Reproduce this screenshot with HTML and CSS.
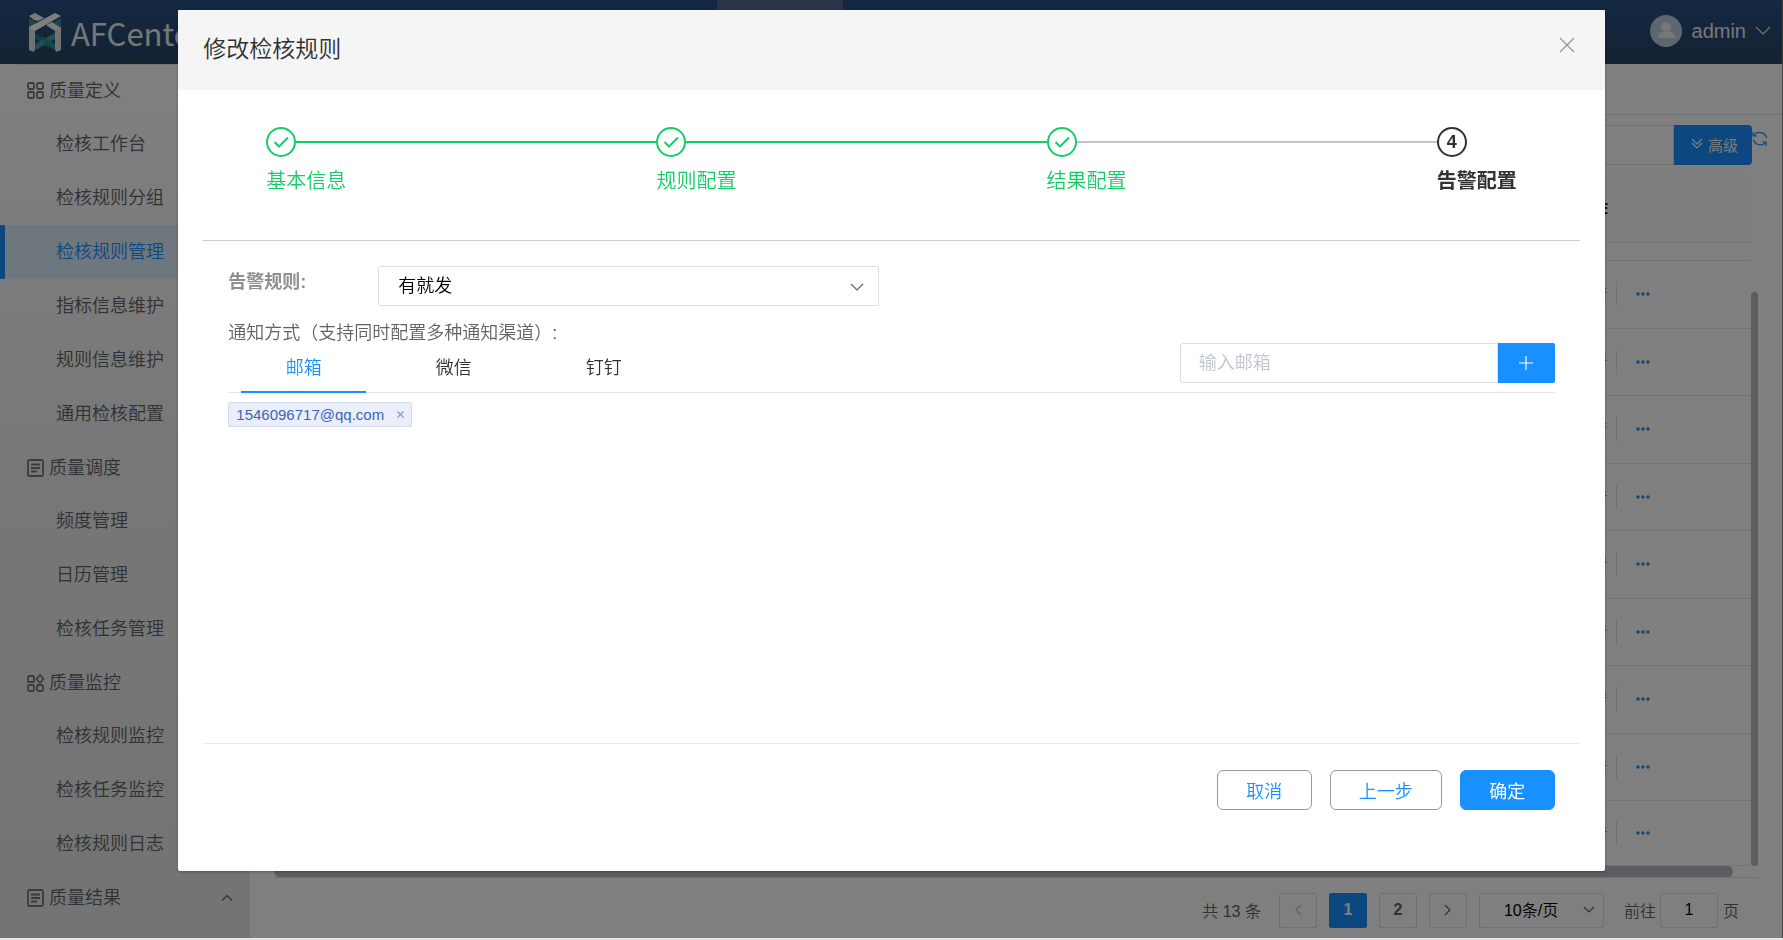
FILE: index.html
```
<!DOCTYPE html>
<html lang="zh-CN">

<head>
    <meta charset="utf-8">
    <title>检核规则管理</title>
    <link rel="stylesheet" href="styles.css">
</head>

<body>
    <div class="page">
        <!-- Header -->
        <header class="topbar">
            <a class="logo" href="#">
                <svg width="32" height="39" viewBox="0 0 32 39">
                    <path fill="#3f8f94" d="M0 5l7 4v2l-7 4zM32 5l-7 4v2l7 5z" />
                    <path fill="#1f7f88" d="M6 20l20 11v6L6 26z" />
                    <path fill="#3aa3a8" d="M26 20v6L6 37v-6z" />
                    <path fill="#2b8d94" d="M12 23l14 8v6l-10-5z" />
                    <path fill="#dfe8e6" d="M0 14l6 4v18l-1 3-5-2zM32 14l-6 4v18l1 3 5-2z" />
                    <path fill="#f4f8f7" d="M0 3l6-3 9 5-6 3-4-1zM17 12l6-3 9 6-6 3z" />
                    <path fill="#ffffff" d="M26 0l6 3L6 18l-6-3v-1z" />
                </svg>
                <span>AFCenter</span>
            </a>
            <div class="top-tab"></div>
            <button class="user">
                <svg width="33" height="33" viewBox="0 0 33 33">
                    <circle cx="16" cy="16" r="16" fill="#b9cfe0" />
                    <circle cx="16" cy="12" r="5" fill="#eee" />
                    <path fill="#eee" d="M8 23c0-4 3-6 5-6h7c2 0 5 2 5 6z" />
                </svg>
                <span>admin</span>
                <svg width="16" height="10" viewBox="0 0 16 10"><path class="line" d="M1 1l7 7 7-7" /></svg>
            </button>
        </header>

        <div class="layout">
            <!-- Sidebar -->
            <nav class="sidebar">
                <div class="menu-title">
                    <svg width="18" height="18" viewBox="0 0 18 18"><g class="icon"><rect x="2" y="1" width="6" height="6" rx="1.5" /><rect x="11" y="1" width="6" height="6" rx="1.5" /><rect x="2" y="10" width="6" height="6" rx="1.5" /><rect x="11" y="10" width="6" height="6" rx="1.5" /></g></svg>
                    质量定义
                </div>
                <a class="menu-item" href="#">检核工作台</a>
                <a class="menu-item" href="#">检核规则分组</a>
                <a class="menu-item active" href="#">检核规则管理</a>
                <a class="menu-item" href="#">指标信息维护</a>
                <a class="menu-item" href="#">规则信息维护</a>
                <a class="menu-item" href="#">通用检核配置</a>
                <div class="menu-title">
                    <svg width="18" height="18" viewBox="0 0 18 18"><g class="icon"><rect x="2" y="1" width="15" height="16" rx="1.5" /><path d="M5 5.500h9M5 9h9M5 12.500h6" /></g></svg>
                    质量调度
                </div>
                <a class="menu-item" href="#">频度管理</a>
                <a class="menu-item" href="#">日历管理</a>
                <a class="menu-item" href="#">检核任务管理</a>
                <div class="menu-title">
                    <svg width="18" height="18" viewBox="0 0 18 18"><g class="icon"><rect x="2" y="2" width="6" height="6" rx="1" /><path d="M14 1l3.500 4-3.500 4-3.500-4z" /><rect x="2" y="11" width="6" height="6" rx="1.500" /><rect x="11" y="11" width="6" height="6" rx="1.500" /></g></svg>
                    质量监控
                </div>
                <a class="menu-item" href="#">检核规则监控</a>
                <a class="menu-item" href="#">检核任务监控</a>
                <a class="menu-item" href="#">检核规则日志</a>
                <div class="menu-title">
                    <svg width="18" height="18" viewBox="0 0 18 18"><g class="icon"><rect x="2" y="1" width="15" height="16" rx="1.5" /><path d="M5 5.500h9M5 9h9M5 12.500h6" /></g></svg>
                    质量结果
                    <svg class="arrow" width="12" height="8" viewBox="0 0 12 8"><path class="line" d="M1 6.500l5-5 5 5" /></svg>
                </div>
            </nav>

            <!-- Rule list -->
            <main class="main">
                <div class="crumb"></div>
                <div class="search">
                    <input type="text" aria-label="搜索">
                    <button class="advanced">
                        <svg width="12" height="12" viewBox="0 0 12 12"><path class="line" d="M1 1l5 5 5-5M1 5l5 5 5-5" /></svg>
                        高级
                    </button>
                    <button class="refresh" aria-label="刷新">
                        <svg width="16" height="18" viewBox="0 0 16 18"><path class="line" d="M1 2v4h4M1.500 6a7 7 0 0 1 13 2.500M14 16v-4h-4M14 12a7 7 0 0 1-12.500-2.500" /></svg>
                    </button>
                </div>
                <div class="table-wrap">
                    <table class="table">
                        <thead>
                            <tr><th></th><th>操作</th></tr>
                        </thead>
                        <tbody id="rows">
                            <tr class="cut"><td></td><td></td></tr>
                        </tbody>
                    </table>
                    <div class="scroll-y"><i></i></div>
                </div>
                <div class="scroll-x"><i></i></div>
                <div class="pager">
                    <span class="total">共 13 条</span>
                    <button disabled aria-label="上一页"><svg width="8" height="12" viewBox="0 0 8 12"><path class="line" d="M7 1L2 6l5 5" /></svg></button>
                    <button class="current">1</button>
                    <button>2</button>
                    <button aria-label="下一页"><svg width="8" height="12" viewBox="0 0 8 12"><path class="line" d="M1 1l5 5-5 5" /></svg></button>
                    <div class="select page-size">
                        <select aria-label="每页条数"><option>10条/页</option></select>
                        <svg width="12" height="8" viewBox="0 0 12 8"><path class="line" d="M1 1l5 5 5-5" /></svg>
                    </div>
                    <label for="jump">前往</label>
                    <input type="text" id="jump" value="1">
                    <span>页</span>
                </div>
            </main>
        </div>
    </div>

    <!-- Edit dialog -->
    <div class="mask">
        <div class="dialog" role="dialog" aria-labelledby="dialogTitle">
            <div class="dialog-header">
                <h1 id="dialogTitle">修改检核规则</h1>
                <button class="close" aria-label="关闭"><svg width="16" height="16" viewBox="0 0 16 16"><path class="line" d="M1 1l14 14M15 1L1 15" /></svg></button>
            </div>
            <div class="dialog-body">
                <ol class="steps">
                    <li class="step done">
                        <div class="step-head"><b><svg width="16" height="12" viewBox="0 0 16 12"><path d="M1.500 6l4.500 4.500 9-9" /></svg></b></div>
                        基本信息
                    </li>
                    <li class="step done">
                        <div class="step-head"><b><svg width="16" height="12" viewBox="0 0 16 12"><path d="M1.500 6l4.500 4.500 9-9" /></svg></b></div>
                        规则配置
                    </li>
                    <li class="step done next">
                        <div class="step-head"><b><svg width="16" height="12" viewBox="0 0 16 12"><path d="M1.500 6l4.500 4.500 9-9" /></svg></b></div>
                        结果配置
                    </li>
                    <li class="step now">
                        <div class="step-head"><b>4</b></div>
                        告警配置
                    </li>
                </ol>
                <form class="form">
                    <div class="form-row">
                        <label for="alarmRule">告警规则:</label>
                        <div class="select rule">
                            <select id="alarmRule"><option>有就发</option></select>
                            <svg width="14" height="8" viewBox="0 0 14 8"><path class="line" d="M1 1l6 6 6-6" /></svg>
                        </div>
                    </div>
                    <p class="notice">通知方式（支持同时配置多种通知渠道）:</p>
                    <div class="tabs">
                        <button type="button" class="tab active">邮箱</button>
                        <button type="button" class="tab">微信</button>
                        <button type="button" class="tab">钉钉</button>
                        <div class="add-mail">
                            <input type="text" placeholder="输入邮箱" aria-label="邮箱">
                            <button type="button" aria-label="添加"><svg width="14" height="14" viewBox="0 0 14 14"><path class="line" d="M7 0v14M0 7h14" /></svg></button>
                        </div>
                    </div>
                    <div class="tags">
                        <span class="tag">1546096717@qq.com
                            <button type="button" aria-label="删除"><svg width="7" height="7" viewBox="0 0 7 7"><path class="line" d="M.5.5l6 6M6.500.5l-6 6" /></svg></button>
                        </span>
                    </div>
                </form>
                <div class="dialog-footer">
                    <button>取消</button>
                    <button>上一步</button>
                    <button class="primary">确定</button>
                </div>
            </div>
        </div>
    </div>

    <script>
        // 9 visible rows, each with the same actions
        const rows = document.getElementById('rows');
        for (let i = 0; i < 9; i++) {
            const tr = document.createElement('tr');
            tr.innerHTML = '<td></td><td><div class="ops"><a href="#">详情</a><button aria-label="更多">' +
                '<svg width="14" height="4" viewBox="0 0 14 4"><circle cx="2" cy="2" r="1.700"/><circle cx="7" cy="2" r="1.700"/><circle cx="12" cy="2" r="1.700"/></svg>' +
                '</button></div></td>';
            rows.appendChild(tr);
        }
    </script>
</body>

</html>
```
FILE: styles.css
```
* {
    box-sizing: border-box;
}

body {
    margin: 0;
    height: 100vh;
    overflow: hidden;
    background-color: #e6e6e6;
    font-family: "Liberation Sans", "Noto Sans CJK SC", sans-serif;
    font-size: 18px;
    font-weight: 350;
    color: #606266;
}

button,
input,
select {
    font: inherit;
    color: inherit;
    margin: 0;
    padding: 0;
    border: none;
    background: none;
    outline: none;
}

button {
    cursor: pointer;
}

a {
    color: inherit;
    text-decoration: none;
}

svg {
    display: block;
    flex: none;
}

.line {
    fill: none;
    stroke: currentColor;
    stroke-width: 1.2;
}

.page {
    display: flex;
    flex-direction: column;
    height: calc(100vh - 2px);
    background-color: #fff;
    border-right: 1px solid #888;
}

/* Header */
.topbar {
    flex: none;
    display: flex;
    height: 64px;
    background: linear-gradient(#28508a, #2a4560);
    color: #eee;
}

.logo {
    flex: 20;
    display: flex;
    align-items: center;
    gap: 10px;
    padding-left: 29px;
    font-family: "Noto Sans CJK SC", sans-serif;
    font-size: 31px;
    font-weight: 400;
}

.top-tab {
    width: 126px;
    background-color: #52688f;
}

.user {
    flex: 27;
    display: flex;
    align-items: center;
    justify-content: flex-end;
    gap: 9px;
    padding: 0 11px 2px 0;
    font-size: 20px;
}

.layout {
    flex: 1;
    display: flex;
    min-height: 0;
}

/* Sidebar */
.sidebar {
    flex: none;
    width: 250px;
    background: linear-gradient(#fff, #eee 50%, #e8e8e8);
    color: #606266;
}

.menu-title {
    display: flex;
    align-items: center;
    gap: 5px;
    height: 53px;
    margin-left: 17px;
    padding: 0 0 5px 9px;
    border-top: 1px solid #e9e9e9;
}

.menu-title svg {
    margin-top: 4px;
}

.menu-title .arrow {
    margin-left: auto;
    margin-right: 17px;
}

.icon {
    fill: none;
    stroke: #777;
    stroke-width: 1.8;
}

.menu-item {
    display: block;
    height: 54px;
    line-height: 54px;
    padding-left: 56px;
}

.menu-item.active {
    padding-left: 51px;
    border-left: 5px solid #1890ff;
    background-color: #deeefc;
    color: #1890ff;
}

/* Rule list */
.main {
    flex: 1;
    display: flex;
    flex-direction: column;
    min-width: 0;
    padding-left: 24px;
}

.crumb {
    height: 51px;
    margin-left: -24px;
    border-bottom: 1px solid #dcdfe6;
}

.search {
    display: flex;
    height: 40px;
    margin: 10px 14px 0 0;
}

.search input {
    flex: 1;
    border: 1px solid #dcdfe6;
}

.advanced {
    display: flex;
    align-items: center;
    gap: 5px;
    padding: 0 14px 2px 17px;
    border-radius: 0 4px 4px 0;
    background-color: #1890ff;
    color: #fff;
    font-size: 15px;
}

.refresh {
    align-self: flex-start;
    padding-top: 5px;
    color: #1890ff;
}

.table-wrap {
    display: flex;
    margin: 10px 24px 0 0;
}

.table {
    flex: 1;
    border-collapse: collapse;
}

.table th {
    height: 67px;
    padding: 0 12px;
    background-color: #fafafa;
    border-bottom: 1px solid #dfe2ef;
    color: #222;
    font-weight: 700;
    text-align: left;
}

.table td {
    height: 67px;
    padding: 0 11px;
    border-bottom: 1px solid #e4e6f2;
}

.table tr:nth-child(even) td {
    height: 68px;
}

.table th:last-child {
    width: 191px;
}

.table .cut td {
    height: 18px;
}

.table tr:last-child td {
    height: 65px;
}

.ops {
    display: flex;
    align-items: center;
    height: 24px;
    color: #1890ff;
}

.ops button {
    height: 24px;
    margin-left: 9px;
    padding-left: 19px;
    border-left: 1px solid #dcdfe6;
    fill: #1890ff;
}

.scroll-y {
    width: 7px;
    padding-top: 117px;
}

.scroll-y i {
    display: block;
    height: 100%;
    border-radius: 4px;
    background-color: #b9bbc0;
}

.scroll-x {
    height: 12px;
    margin-right: 24px;
    border-bottom: 1px solid #dfe2ef;
}

.scroll-x i {
    display: block;
    height: 11px;
    margin-right: 25px;
    border-radius: 6px;
    background-color: #b9bbc0;
}

.pager {
    display: flex;
    align-items: center;
    justify-content: flex-end;
    gap: 12px;
    margin-top: 15px;
    padding-right: 43px;
    font-size: 16px;
}

.pager button {
    display: flex;
    align-items: center;
    justify-content: center;
    width: 38px;
    height: 35px;
    border: 1px solid #dcdfe6;
    border-radius: 2px;
    font-weight: 700;
}

.pager button:disabled {
    color: #c0c4cc;
}

.pager .total {
    margin-right: 6px;
}

.pager .current {
    border-color: #1890ff;
    background-color: #1890ff;
    color: #fff;
}

.pager input {
    width: 58px;
    height: 35px;
    margin: 0 -7px 0 -8px;
    border: 1px solid #dcdfe6;
    border-radius: 2px;
    color: #000;
    text-align: center;
}

.select {
    display: grid;
    align-items: center;
    border: 1px solid #dcdfe6;
    border-radius: 2px;
    color: #000;
}

.select select,
.select svg {
    grid-area: 1 / 1;
}

.select select {
    appearance: none;
    width: 100%;
    height: 100%;
}

.select svg {
    justify-self: end;
    color: #606266;
    pointer-events: none;
}

.page-size {
    width: 125px;
    height: 35px;
    margin-right: 8px;
}

.page-size select {
    padding-left: 24px;
}

.page-size svg {
    margin-right: 8px;
}

/* Edit dialog */
.mask {
    position: fixed;
    inset: 0 0 2px;
    background-color: rgba(0, 0, 0, 0.5);
}

.dialog {
    width: 80%;
    margin: 10px auto 0;
    border-radius: 2px;
    background-color: #fff;
    box-shadow: 0 1px 3px rgba(0, 0, 0, 0.3);
}

.dialog-header {
    display: flex;
    justify-content: space-between;
    align-items: flex-start;
    height: 80px;
    padding: 0 30px 0 25px;
    background-color: #f5f5f5;
}

.dialog-header h1 {
    margin: 0;
    color: #303133;
    font-size: 23px;
    font-weight: 350;
    line-height: 78px;
}

.close {
    margin-top: 27px;
    color: #909399;
}

.dialog-body {
    padding: 0 25px 61px;
}

.steps {
    display: flex;
    margin: 0;
    padding: 37px 63px 44px;
    border-bottom: 1px solid #ccc;
    list-style: none;
    font-size: 20px;
    line-height: 30px;
}

.step {
    flex: 1;
    color: #13ce66;
}

.step-head {
    display: flex;
    align-items: center;
    margin-bottom: 9px;
}

.step-head b {
    display: flex;
    align-items: center;
    justify-content: center;
    width: 30px;
    height: 30px;
    border: 2px solid currentColor;
    border-radius: 50%;
    font-size: 18px;
}

.step-head path {
    fill: none;
    stroke: currentColor;
    stroke-width: 2;
}

.step-head::after {
    content: "";
    flex: 1;
    height: 2px;
    background-color: currentColor;
}

.step.next .step-head::after {
    background-color: #c0c4cc;
}

.step.now {
    flex: none;
    color: #303133;
    font-weight: 700;
}

.step.now .step-head::after {
    display: none;
}

.form {
    min-height: 502px;
    padding: 25px 25px 0;
}

.form-row {
    display: flex;
}

.form-row label {
    width: 150px;
    color: #909090;
    font-weight: 700;
    line-height: 32px;
}

.rule {
    width: 501px;
    height: 40px;
}

.rule select {
    padding-left: 19px;
}

.rule svg {
    margin: 2px 14px 0 0;
}

.notice {
    margin: 14px 0 0;
    line-height: 26px;
}

.tabs {
    display: flex;
    height: 47px;
    border-bottom: 1px solid #e4e7ed;
}

.tab {
    width: 125px;
    height: 47px;
    margin: 0 12px 0 13px;
    padding-bottom: 5px;
    border-bottom: 2px solid transparent;
    color: #303133;
}

.tab.active {
    border-color: #1890ff;
    color: #1890ff;
}

.add-mail {
    display: flex;
    width: 375px;
    height: 40px;
    margin-left: auto;
    margin-top: -3px;
}

.add-mail input {
    flex: 1;
    min-width: 0;
    padding: 0 18px;
    border: 1px solid #dcdfe6;
    border-radius: 3px 0 0 3px;
}

.add-mail input::placeholder {
    color: #c0c4cc;
}

.add-mail button {
    display: flex;
    align-items: center;
    justify-content: center;
    width: 57px;
    border-radius: 0 2px 2px 0;
    background-color: #1890ff;
    color: #fff;
}

.tags {
    display: flex;
    padding-top: 9px;
}

.tag {
    display: flex;
    align-items: center;
    gap: 13px;
    height: 25px;
    padding: 0 7px;
    border: 1px solid #d5def0;
    border-radius: 2px;
    background-color: #e9eef8;
    color: #3a66b8;
    font-size: 15px;
}

.tag button {
    color: #7f9bd2;
}

.dialog-footer {
    display: flex;
    justify-content: flex-end;
    gap: 18px;
    padding: 26px 25px 0;
    border-top: 1px solid #ebebeb;
}

.dialog-footer button {
    min-width: 95px;
    height: 40px;
    padding: 0 28px;
    border: 1px solid #999;
    border-radius: 6px;
    color: #1890ff;
}

.dialog-footer .primary {
    border-color: #1890ff;
    background-color: #1890ff;
    color: #fff;
    font-weight: 400;
}
```
